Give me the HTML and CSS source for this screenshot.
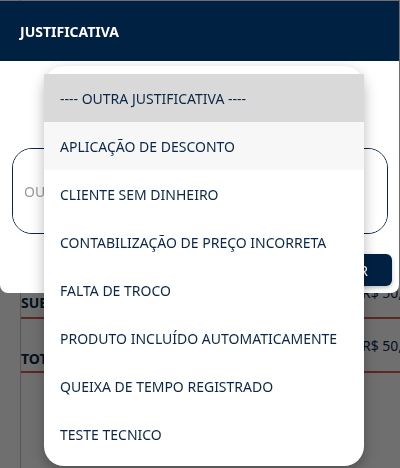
FILE: index.html
```html
<!DOCTYPE html>
<html lang="pt-BR">
<head>
    <meta charset="UTF-8">
    <meta name="viewport" content="width=device-width, initial-scale=1.0">
    <title>Justificativa</title>
    <link rel="stylesheet" href="styles.css">
</head>
<body>
    <div id="page">
        <div class="totals">
            <div class="totals-row sub">
                <span class="label">SUBTOTAL</span>
                <span class="value">R$ 50,00</span>
            </div>
            <div class="totals-row total">
                <span class="label">TOTAL</span>
                <span class="value">R$ 50,00</span>
            </div>
        </div>
    </div>

    <div id="backdrop"></div>

    <div id="dialog">
        <div class="dialog-header">JUSTIFICATIVA</div>
        <div class="dialog-body">
            <textarea class="reason-text" placeholder="OUTRA JUSTIFICATIVA"></textarea>
            <div class="dialog-actions">
                <button class="confirm">CONFIRMAR</button>
            </div>
        </div>
    </div>

    <ul id="reason-menu">
        <li class="selected">---- OUTRA JUSTIFICATIVA ----</li>
        <li class="hover">APLICAÇÃO DE DESCONTO</li>
        <li>CLIENTE SEM DINHEIRO</li>
        <li>CONTABILIZAÇÃO DE PREÇO INCORRETA</li>
        <li>FALTA DE TROCO</li>
        <li>PRODUTO INCLUÍDO AUTOMATICAMENTE</li>
        <li>QUEIXA DE TEMPO REGISTRADO</li>
        <li>TESTE TECNICO</li>
    </ul>
</body>
</html>
```

FILE: styles.css
```css
body {
    margin: 0;
    width: 400px;
    height: 468px;
    overflow: hidden;
    position: relative;
    font-family: "Noto Sans", "Open Sans", sans-serif;
    color: #0b2748;
    background-color: #ffffff;
}
#page {
    padding-top: 287px;
    height: 181px;
    margin-left: 20px;
    border-left: 1px solid #c9c9c9;
}
.totals-row {
    display: flex;
    justify-content: space-between;
    border-bottom: 2px solid #d65a4e;
    font-size: 14px;
}
.totals-row .label {
    font-weight: bold;
}
.totals-row .value {
    margin-right: -20px;
    width: 58px;
    overflow: hidden;
    white-space: nowrap;
}
.sub {
    height: 30px;
    align-items: center;
}
.sub .value {
    align-self: flex-start;
    margin-top: -4px;
}
.total {
    height: 54px;
    align-items: flex-end;
    padding-bottom: 3px;
    box-sizing: border-box;
}
.total .value {
    align-self: center;
    margin-top: 4px;
}
#backdrop {
    position: absolute;
    inset: 0;
    background-color: rgba(0, 0, 0, 0.565);
}
#dialog {
    position: absolute;
    top: 1px;
    left: 0;
    width: 399px;
    background-color: #ffffff;
    border-radius: 0 0 8px 8px;
    overflow: hidden;
}
.dialog-header {
    height: 60px;
    display: flex;
    align-items: center;
    padding-left: 20px;
    background-color: #012142;
    color: #ffffff;
    font-size: 14px;
    font-weight: bold;
}
.dialog-body {
    padding: 87px 7px 7px 12px;
}
.reason-text {
    display: block;
    box-sizing: border-box;
    width: 376px;
    height: 86px;
    padding: 33px 11px;
    border: 1px solid #0b2748;
    border-radius: 20px;
    resize: none;
    font-family: "Noto Sans", "Open Sans", sans-serif;
    font-size: 14px;
}
.reason-text::placeholder {
    color: #9a9a9a;
}
.dialog-actions {
    display: flex;
    justify-content: flex-end;
    margin-top: 20px;
}
.confirm {
    height: 32px;
    padding: 0 24px;
    border: none;
    border-radius: 6px;
    background-color: #012142;
    color: #ffffff;
    font-family: "Noto Sans", "Open Sans", sans-serif;
    font-size: 14px;
    box-shadow: 0 2px 4px rgba(0, 0, 0, 0.25);
}
#reason-menu {
    position: absolute;
    top: 66px;
    left: 44px;
    width: 320px;
    margin: 0;
    padding: 8px 0;
    list-style: none;
    background-color: #ffffff;
    border-radius: 20px;
    box-shadow: 0 5px 14px rgba(0, 0, 0, 0.28);
}
#reason-menu li {
    height: 48px;
    display: flex;
    align-items: center;
    padding-left: 16px;
    font-size: 14px;
    color: #0b2748;
}
#reason-menu li.selected {
    background-color: #d9d9d9;
}
#reason-menu li.hover {
    background-color: #f7f7f7;
}
```
